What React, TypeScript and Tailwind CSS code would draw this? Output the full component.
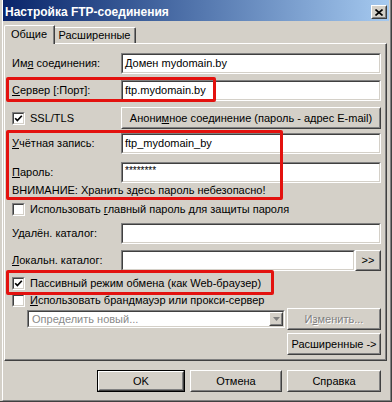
import type { ReactNode } from "react";

function Sunken({ className = "", children, inner = "bg-white" }: { className?: string; children?: ReactNode; inner?: string }) {
  return (
    <div className={`border border-t-[#808080] border-l-[#808080] border-b-white border-r-white ${className}`}>
      <div className={`h-full w-full border border-t-[#404040] border-l-[#404040] border-b-[#d4d0c8] border-r-[#d4d0c8] ${inner}`}>
        {children}
      </div>
    </div>
  );
}

function Raised({ className = "", children }: { className?: string; children?: ReactNode }) {
  return (
    <div className={`border border-t-white border-l-white border-b-[#404040] border-r-[#404040] bg-[#d4d0c8] ${className}`}>
      <div className="h-full w-full border border-t-[#d4d0c8] border-l-[#d4d0c8] border-b-[#808080] border-r-[#808080] flex items-center justify-center">
        {children}
      </div>
    </div>
  );
}

function Field({ value, className = "w-[260px]" }: { value?: string; className?: string }) {
  return (
    <Sunken className={`h-[21px] ${className}`}>
      <div className="h-full flex items-center px-[2px] whitespace-nowrap overflow-hidden">{value}</div>
    </Sunken>
  );
}

function Check({ checked }: { checked?: boolean }) {
  return (
    <Sunken className="w-[13px] h-[13px] shrink-0" inner="bg-white flex items-center justify-center">
      {checked && (
        <svg width="9" height="9" viewBox="0 0 9 9">
          <path d="M1.2 4.2 L3.4 6.6 L7.8 1.8" fill="none" stroke="#000" strokeWidth="1.7" />
        </svg>
      )}
    </Sunken>
  );
}

function CheckRow({ checked, children }: { checked?: boolean; children: ReactNode }) {
  return (
    <div className="h-[16px] flex items-center gap-[5px]">
      <Check checked={checked} />
      <span className="whitespace-nowrap">{children}</span>
    </div>
  );
}

export default function App() {
  return (
    <div className="relative w-[392px] h-[402px] bg-[#d4d0c8] pl-[2px] border-r border-b border-r-[#404040] border-b-[#404040] font-['Liberation_Sans',Arial,sans-serif] text-[11px] text-black leading-none">
      <div className="h-full flex flex-col border-l border-r border-b border-l-white border-r-[#808080] border-b-[#808080] pr-[1px]">
        {/* title bar */}
        <div className="h-[21px] shrink-0 pt-[3px] pl-[2px] pr-[2px] flex items-center justify-between bg-linear-to-r from-[#0a246a] to-[#a6caf0]">
          <span className="text-white font-bold text-[12px]">Настройка FTP-соединения</span>
          <Raised className="w-[16px] h-[14px]">
            <svg width="8" height="7" viewBox="0 0 8 7">
              <path d="M0.5 0.5 L7.5 6.5 M7.5 0.5 L0.5 6.5" stroke="#000" strokeWidth="1.6" />
            </svg>
          </Raised>
        </div>

        {/* tabs */}
        <div className="mt-[4px] ml-[1px] h-[18px] flex items-end">
          <div className="relative z-10 -mb-[1px] h-[19px] w-[51px] bg-[#d4d0c8] border-t border-l border-r border-t-white border-l-white border-r-[#404040] rounded-tl-[2px]">
            <div className="h-full border-r border-r-[#808080] flex items-center justify-center pb-[1px]">Общие</div>
          </div>
          <div className="h-[16px] w-[81px] border-t border-r border-t-white border-r-[#404040] rounded-tr-[2px]">
            <div className="h-full border-r border-r-[#808080] flex items-center justify-center">Расширенные</div>
          </div>
        </div>

        {/* panel */}
        <div className="ml-[1px] mr-[2px] h-[318px] shrink-0 border-t border-l border-r border-b border-t-white border-l-white border-r-[#404040] border-b-[#404040]">
          <div className="h-full border-r border-b border-r-[#808080] border-b-[#808080] pl-[7px] pr-[4px] pt-[9px] flex flex-col">
            <div className="flex items-center">
              <span className="w-[109px]">Им<u>я</u> соединения:</span>
              <Field value="Домен mydomain.by" />
            </div>
            <div className="mt-[6px] flex items-center">
              <span className="w-[109px]"><u>С</u>ервер [:Порт]:</span>
              <Field value="ftp.mydomain.by" />
            </div>
            <div className="mt-[6px] flex items-center">
              <div className="w-[109px] flex items-center gap-[5px]">
                <Check checked />
                <span>SSL/TLS</span>
              </div>
              <Raised className="w-[260px] h-[22px]">
                <span>Анони<u>м</u>ное соединение (пароль - адрес E-mail)</span>
              </Raised>
            </div>
            <div className="mt-[4px] flex items-center">
              <span className="w-[109px]"><u>У</u>чётная запись:</span>
              <Field value="ftp_mydomain_by" />
            </div>
            <div className="mt-[8px] flex items-center">
              <span className="w-[109px]"><u>П</u>ароль:</span>
              <Sunken className="h-[21px] w-[260px]">
                <div className="h-full px-[2px] pt-[2px] text-[10px]">********</div>
              </Sunken>
            </div>
            <div className="h-[14px] flex items-center whitespace-nowrap">ВНИМАНИЕ: Хранить здесь пароль небезопасно!</div>
            <div className="mt-[4px]">
              <CheckRow>Использовать <u>г</u>лавный пароль для защиты пароля</CheckRow>
            </div>
            <div className="mt-[6px] flex items-center">
              <span className="w-[109px]">У<u>д</u>алён. каталог:</span>
              <Field />
            </div>
            <div className="mt-[6px] flex items-center">
              <span className="w-[109px]"><u>Л</u>окальн. каталог:</span>
              <Field className="w-[234px]" />
              <Raised className="w-[26px] h-[21px]">
                <span>&gt;&gt;</span>
              </Raised>
            </div>
            <div className="mt-[4px]">
              <CheckRow checked>Пассивный режим обмена (как Web-браузер)</CheckRow>
            </div>
            <div className="mt-[1px]">
              <CheckRow><u>И</u>спользовать брандмауэр или прокси-сервер</CheckRow>
            </div>
            <div className="h-[22px] flex items-center">
              <Sunken className="ml-[15px] w-[258px] h-[18px]" inner="bg-white flex items-center">
                <span className="flex-1 pl-[3px] text-[#8a8a8a] whitespace-nowrap">Определить новый...</span>
                <Raised className="w-[14px] h-full">
                  <svg width="7" height="4" viewBox="0 0 7 4">
                    <path d="M0 0 H7 L3.5 4 Z" fill="#808080" />
                  </svg>
                </Raised>
              </Sunken>
              <Raised className="ml-[2px] w-[94px] h-[22px]">
                <span className="text-[#808080] [text-shadow:1px_1px_0_#fff]">И<u>з</u>менить...</span>
              </Raised>
            </div>
            <div className="mt-[3px] flex justify-end">
              <Raised className="w-[94px] h-[22px]">
                <span>Расширенные -&gt;</span>
              </Raised>
            </div>
          </div>
        </div>

        {/* buttons */}
        <div className="mt-[9px] pr-[8px] flex justify-end gap-[5px]">
          <div className="border border-black">
            <Raised className="w-[86px] h-[20px]">
              <span>OK</span>
            </Raised>
          </div>
          <Raised className="w-[92px] h-[22px]">
            <span>Отмена</span>
          </Raised>
          <Raised className="w-[94px] h-[22px]">
            <span>Справка</span>
          </Raised>
        </div>
      </div>

      {/* red annotation frames */}
      <div className="absolute left-[6px] top-[77px] w-[210px] h-[25px] border-[3px] border-[#e3120f] rounded-[2px]" />
      <div className="absolute left-[6px] top-[130px] w-[277px] h-[70px] border-[3px] border-[#e3120f] rounded-[2px]" />
      <div className="absolute left-[6px] top-[270px] w-[268px] h-[25px] border-[3px] border-[#e3120f] rounded-[2px]" />
    </div>
  );
}
